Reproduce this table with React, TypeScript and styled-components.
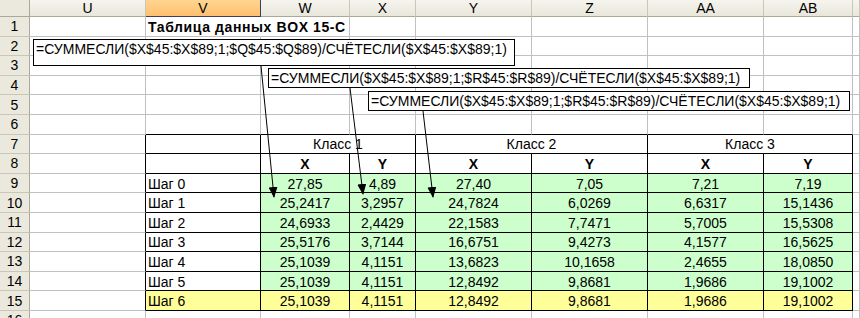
import styled, { createGlobalStyle } from 'styled-components';

const GRID = '#c0c0c0';
const LINE = '#000000';
const GREEN = '#ccffcc';
const YELLOW = '#ffff99';

const columns = ['U', 'V', 'W', 'X', 'Y', 'Z', 'AA', 'AB', ''];

const steps = [
  ['Шаг 0', '27,85', '4,89', '27,40', '7,05', '7,21', '7,19'],
  ['Шаг 1', '25,2417', '3,2957', '24,7824', '6,0269', '6,6317', '15,1436'],
  ['Шаг 2', '24,6933', '2,4429', '22,1583', '7,7471', '5,7005', '15,5308'],
  ['Шаг 3', '25,5176', '3,7144', '16,6751', '9,4273', '4,1577', '16,5625'],
  ['Шаг 4', '25,1039', '4,1151', '13,6823', '10,1658', '2,4655', '18,0850'],
  ['Шаг 5', '25,1039', '4,1151', '12,8492', '9,8681', '1,9686', '19,1002'],
  ['Шаг 6', '25,1039', '4,1151', '12,8492', '9,8681', '1,9686', '19,1002'],
];

const formulas = [
  { left: 33, top: 39, height: 27, text: '=СУММЕСЛИ($X$45:$X$89;1;$Q$45:$Q$89)/СЧЁТЕСЛИ($X$45:$X$89;1)' },
  { left: 268, top: 68, height: 20, text: '=СУММЕСЛИ($X$45:$X$89;1;$R$45:$R$89)/СЧЁТЕСЛИ($X$45:$X$89;1)' },
  { left: 368, top: 91, height: 20, text: '=СУММЕСЛИ($X$45:$X$89;1;$R$45:$R$89)/СЧЁТЕСЛИ($X$45:$X$89;1)' },
];

const arrows = [
  { x1: 261, y1: 66, x2: 274, y2: 197 },
  { x1: 350, y1: 88, x2: 363, y2: 194 },
  { x1: 423, y1: 111, x2: 433, y2: 197 },
];

const GlobalStyle = createGlobalStyle`
  html, body {
    margin: 0;
    padding: 0;
    background: #ffffff;
    overflow: hidden;
  }
  body {
    font-family: "Liberation Sans", Arial, sans-serif;
    font-size: 14px;
    color: #000000;
  }
`;

export default function App() {
  const rows = Array.from({ length: 16 }, (_, i) => i + 1);

  const renderRow = (r: number) => {
    const inTableRow = r >= 7 && r <= 15;
    const plain = (c: number) => {
      const inTable = inTableRow && c >= 1 && c <= 7;
      let right = inTable || (c === 0 && inTableRow) ? LINE : GRID;
      const bottom = inTable || (r === 6 && c >= 1 && c <= 7) ? LINE : GRID;
      if (r === 1 && c === 1) right = 'transparent';
      return { $right: right, $bottom: bottom };
    };

    if (r === 7) {
      return (
        <>
          <Cell key="u" {...plain(0)} />
          <Cell key="v" {...plain(1)} />
          <Cell key="w" $span={2} $align="center" $right={LINE} $bottom={LINE}>Класс 1</Cell>
          <Cell key="y" $span={2} $align="center" $right={LINE} $bottom={LINE}>Класс 2</Cell>
          <Cell key="aa" $span={2} $align="center" $right={LINE} $bottom={LINE}>Класс 3</Cell>
          <Cell key="e" {...plain(8)} />
        </>
      );
    }

    if (r === 8) {
      return columns.map((_, c) => (
        <Cell key={c} {...plain(c)} $align="center" $bold>
          {c >= 2 && c <= 7 ? (c % 2 === 0 ? 'X' : 'Y') : null}
        </Cell>
      ));
    }

    if (r >= 9 && r <= 15) {
      const data = steps[r - 9];
      const last = r === 15;
      return columns.map((_, c) => {
        let bg: string | undefined;
        if (c >= 1 && c <= 7) bg = last ? YELLOW : c === 1 ? undefined : GREEN;
        return (
          <Cell key={c} {...plain(c)} $bg={bg} $align={c === 1 ? 'left' : 'center'}>
            {c >= 1 && c <= 7 ? data[c - 1] : null}
          </Cell>
        );
      });
    }

    return columns.map((_, c) => (
      <Cell key={c} {...plain(c)}>
        {r === 1 && c === 1 ? <Title>Таблица данных BOX 15-C</Title> : null}
      </Cell>
    ));
  };

  return (
    <>
      <GlobalStyle />
      <Sheet>
        <Grid>
          <Corner />
          {columns.map((name, c) => (
            <ColHead key={name + c} $active={name === 'V'}>{name}</ColHead>
          ))}
          {rows.map((r) => (
            <Row key={r}>
              <RowHead>{r}</RowHead>
              {renderRow(r)}
            </Row>
          ))}
        </Grid>

        <Arrows width={860} height={318} viewBox="0 0 860 318">
          <defs>
            <marker id="head" markerUnits="userSpaceOnUse" markerWidth="11" markerHeight="9" refX="10" refY="4.5" orient="auto">
              <path d="M0,0 L11,4.5 L0,9 z" fill="#000" />
            </marker>
          </defs>
          {arrows.map((a, i) => (
            <line key={i} x1={a.x1} y1={a.y1} x2={a.x2} y2={a.y2} stroke="#000" strokeWidth={1} markerEnd="url(#head)" />
          ))}
        </Arrows>

        {formulas.map((f, i) => (
          <Formula key={i} style={{ left: f.left, top: f.top, height: f.height }}>
            {f.text}
          </Formula>
        ))}
      </Sheet>
    </>
  );
}

const Sheet = styled.div`
  position: relative;
  width: 860px;
  height: 318px;
  overflow: hidden;
`;

const Grid = styled.div`
  display: grid;
  grid-template-columns: 30px 116px 115px 89px 66px 116px 116px 116px 89px 1fr;
  grid-template-rows: 17px repeat(16, 19.6px);
`;

const Row = styled.div`
  display: contents;
`;

const Corner = styled.div`
  background: #ebe9dd;
  border-right: 1px solid #aca899;
  border-bottom: 1px solid #aca899;
`;

const ColHead = styled.div<{ $active?: boolean }>`
  display: flex;
  align-items: center;
  justify-content: center;
  background: ${({ $active }) => ($active ? 'linear-gradient(#ffd590, #ffc070)' : 'linear-gradient(#f5f4ee, #e9e7db)')};
  border-right: 1px solid ${({ $active }) => ($active ? '#3c3c64' : '#cbc7b8')};
  border-bottom: 1px solid ${({ $active }) => ($active ? '#3c3c64' : '#aca899')};
  font-size: 14px;
  color: #000;
  overflow: hidden;
  white-space: nowrap;
`;

const RowHead = styled.div`
  display: flex;
  align-items: center;
  justify-content: center;
  background: #ebe9dd;
  border-right: 1px solid #aca899;
  border-bottom: 1px solid #cbc7b8;
  font-size: 14px;
`;

const Cell = styled.div<{
  $bg?: string;
  $right: string;
  $bottom: string;
  $align?: 'left' | 'center';
  $bold?: boolean;
  $span?: number;
}>`
  display: flex;
  align-items: center;
  justify-content: ${({ $align }) => ($align === 'center' ? 'center' : 'flex-start')};
  grid-column: span ${({ $span }) => $span ?? 1};
  padding: 1px 2px 0;
  background: ${({ $bg }) => $bg ?? '#ffffff'};
  border-right: 1px solid ${({ $right }) => $right};
  border-bottom: 1px solid ${({ $bottom }) => $bottom};
  font-weight: ${({ $bold }) => ($bold ? 700 : 400)};
  font-size: 14px;
  white-space: nowrap;
  min-width: 0;
  position: relative;
`;

const Title = styled.span`
  position: relative;
  z-index: 1;
  font-weight: 700;
  letter-spacing: 0.6px;
`;

const Arrows = styled.svg`
  position: absolute;
  left: 0;
  top: 0;
  pointer-events: none;
`;

const Formula = styled.div`
  position: absolute;
  box-sizing: border-box;
  width: 482px;
  display: flex;
  align-items: flex-start;
  padding: 1px 2px 0;
  background: #ffffff;
  border: 1px solid #000000;
  font-size: 14px;
  line-height: 17px;
  white-space: nowrap;
  overflow: hidden;
`;
